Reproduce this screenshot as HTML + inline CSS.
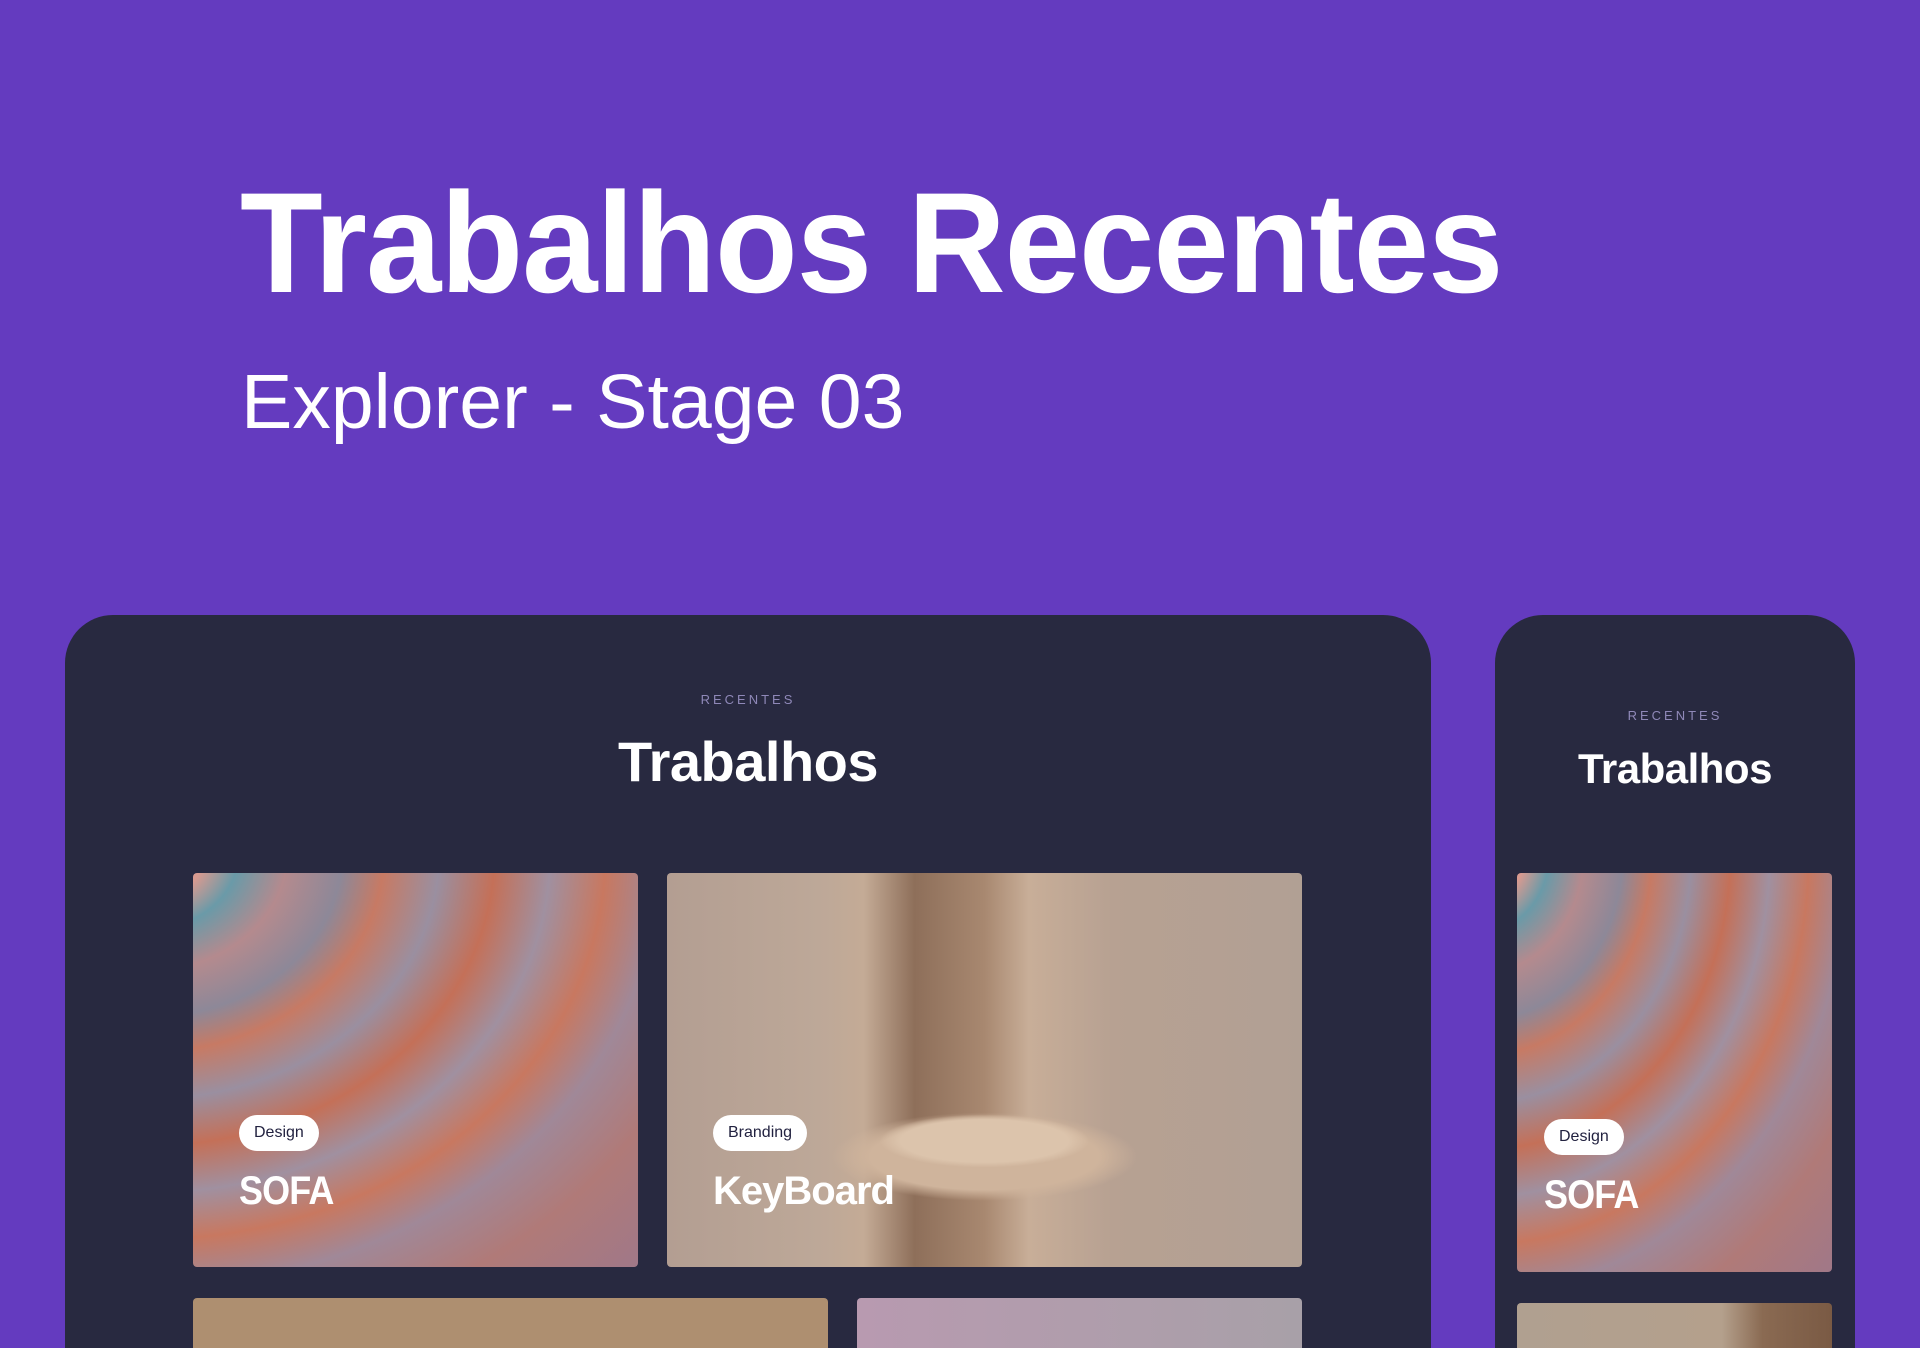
<!DOCTYPE html>
<html><head><meta charset="utf-8"><style>
*{margin:0;padding:0;box-sizing:border-box}
html,body{width:1920px;height:1348px;overflow:hidden}
body{background:#643bbf;font-family:"Liberation Sans",sans-serif;position:relative}
.t{position:absolute;left:240px;top:172px;color:#fff;font-weight:bold;font-size:143px;line-height:1;white-space:nowrap;transform:scaleX(0.947);transform-origin:left top;letter-spacing:-1px}
.s{position:absolute;left:241px;top:364px;color:#fff;font-size:77px;line-height:1;white-space:nowrap}
.card{position:absolute;background:#282940;border-radius:48px 48px 0 0;overflow:hidden}
.rec{position:absolute;color:#8f88b8;font-size:13px;letter-spacing:3px;text-align:center;width:100%}
.h{position:absolute;color:#fff;font-weight:bold;font-size:56px;text-align:center;width:100%;letter-spacing:-0.5px}
.img{position:absolute;border-radius:4px;overflow:hidden}
.tag{position:absolute;background:#fff;color:#222240;border-radius:18px;font-size:16px;padding:0 15px;height:36px;line-height:36px}
.nm{position:absolute;color:#fff;font-weight:bold;font-size:40px;letter-spacing:-1px;transform:scaleX(0.9);transform-origin:left top}
.sofa{background:
radial-gradient(ellipse at -10% -5%, #d89a90 0 8%, #6a9aa8 13%, #b48a8e 20%, #8d8898 28%, #c77a64 34%, #9a8fa0 42%, #c47058 50%, #a090a0 58%, #c87860 66%, #a08898 74%, #b07a78 85%, #a07888 100%)}
.kb{background:radial-gradient(ellipse 22% 9% at 50% 68%, #dcc4ac 0 60%, transparent 75%),radial-gradient(ellipse 30% 14% at 50% 72%, #cfb49c 0 60%, transparent 80%),linear-gradient(90deg,#b39e92 0,#bda898 24%,#c4ab96 31%,#8e6f5a 39%,#a88870 50%,#c8ae98 57%,#b7a192 70%,#b1a094 100%)}
</style></head><body>
<div class="t">Trabalhos Recentes</div>
<div class="s">Explorer - Stage 03</div>

<div class="card" style="left:65px;top:615px;width:1366px;height:733px">
<div class="rec" style="top:77px">RECENTES</div>
<div class="h" style="top:114px">Trabalhos</div>
<div class="img sofa" style="left:128px;top:258px;width:445px;height:394px"></div>
<div class="img kb" style="left:602px;top:258px;width:635px;height:394px"></div>
<div class="tag" style="left:174px;top:500px">Design</div>
<div class="nm" style="left:174px;top:554px">SOFA</div>
<div class="tag" style="left:648px;top:500px">Branding</div>
<div class="nm" style="left:648px;top:554px;transform:none">KeyBoard</div>
<div class="img" style="left:128px;top:683px;width:635px;height:60px;background:#ae8f70"></div>
<div class="img" style="left:792px;top:683px;width:445px;height:60px;background:linear-gradient(90deg,#b89ab0,#a8a0a8)"></div>
</div>

<div class="card" style="left:1495px;top:615px;width:360px;height:733px">
<div class="rec" style="top:93px">RECENTES</div>
<div class="h" style="top:130px;font-size:42px">Trabalhos</div>
<div class="img sofa" style="left:22px;top:258px;width:315px;height:399px"></div>
<div class="tag" style="left:49px;top:504px">Design</div>
<div class="nm" style="left:49px;top:558px">SOFA</div>
<div class="img" style="left:22px;top:688px;width:315px;height:60px;background:linear-gradient(90deg,#b0a090 0,#b4a08c 65%,#8a6a52 78%,#7a5a44 100%)"></div>
</div>
</body></html>
